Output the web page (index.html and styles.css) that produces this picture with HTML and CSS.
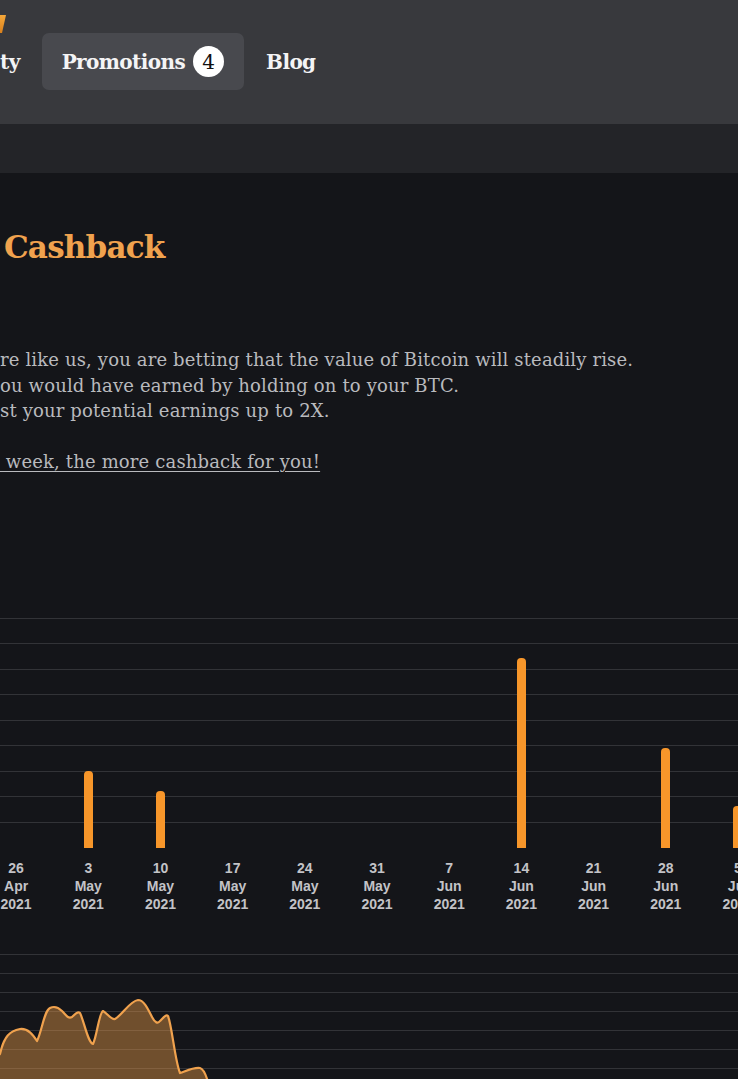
FILE: index.html
```html
<!DOCTYPE html>
<html lang="en">
<head>
<meta charset="utf-8">
<title>Cashback</title>
<link rel="stylesheet" href="styles.css">
</head>
<body>
<header class="topbar">
  <div class="logo-frag">
    <svg width="8" height="18" viewBox="0 0 8 18"><defs><linearGradient id="lg" x1="0" y1="0" x2="0" y2="1"><stop offset="0" stop-color="#f6a83a"/><stop offset="1" stop-color="#d9801c"/></linearGradient></defs><polygon points="0,0 6,0 2,18 0,18" fill="url(#lg)"/></svg>
  </div>
  <nav class="nav">
    <a class="nav-item first">ty</a>
    <a class="nav-item active">Promotions <span class="badge">4</span></a>
    <a class="nav-item">Blog</a>
  </nav>
</header>
<div class="subbar"></div>
<main class="content">
  <h1 class="title">Cashback</h1>
  <p class="intro">re like us, you are betting that the value of Bitcoin will steadily rise.<br>ou would have earned by holding on to your BTC.<br>st your potential earnings up to 2X.<br><br><a class="more">&nbsp;week, the more cashback for you!</a></p>

  <section class="bars">
    <div class="plot">
      <div class="col"></div>
      <div class="col"><div class="bar" style="height:77px"></div></div>
      <div class="col"><div class="bar" style="height:57px"></div></div>
      <div class="col"></div>
      <div class="col"></div>
      <div class="col"></div>
      <div class="col"></div>
      <div class="col"><div class="bar" style="height:190px"></div></div>
      <div class="col"></div>
      <div class="col"><div class="bar" style="height:100px"></div></div>
      <div class="col"><div class="bar" style="height:42px"></div></div>
    </div>
    <div class="axis">
      <div class="tick">26<br>Apr<br>2021</div>
      <div class="tick">3<br>May<br>2021</div>
      <div class="tick">10<br>May<br>2021</div>
      <div class="tick">17<br>May<br>2021</div>
      <div class="tick">24<br>May<br>2021</div>
      <div class="tick">31<br>May<br>2021</div>
      <div class="tick">7<br>Jun<br>2021</div>
      <div class="tick">14<br>Jun<br>2021</div>
      <div class="tick">21<br>Jun<br>2021</div>
      <div class="tick">28<br>Jun<br>2021</div>
      <div class="tick">5<br>Jul<br>2021</div>
    </div>
  </section>

  <section class="area">
    <svg class="area-svg" width="738" height="140" viewBox="0 0 738 140">
      <path class="area-fill" d="M-4,104 L0,100 C4,82 10,77 20,75 C28,74 33,81 37,87 C42,77 44,57 50,54 C54,52 58,53 62,57 C66,61 68,65 72,63 C75,60 78,57 80,59 C84,67 88,89 93,90 C97,82 99,59 103,57 C107,59 111,66 115,65 C122,61 130,47 138,46 C144,46 148,55 152,63 C155,69 158,70 160,67 C163,64 166,60 168,62 C172,72 175,107 180,119 C186,117 194,113 200,114 C204,115 206,121 208,128 L210,150 L-4,150 Z"/>
    </svg>
  </section>
</main>
</body>
</html>
```
FILE: styles.css
```css
html, body {
  margin: 0;
  padding: 0;
  background: #141519;
  overflow: hidden;
}
body {
  width: 738px;
  height: 1079px;
  font-family: "DejaVu Serif", "Liberation Serif", serif;
  color: #b9babe;
}
.topbar {
  background: #38393d;
  height: 124px;
  box-sizing: border-box;
  padding-top: 15px;
}
.logo-frag svg { display: block; }
.nav {
  display: flex;
  align-items: center;
  gap: 2px;
  height: 57px;
}
.nav-item {
  display: flex;
  align-items: center;
  height: 57px;
  box-sizing: border-box;
  padding: 0 20px;
  color: #f4f4f5;
  font-weight: bold;
  font-size: 20px;
  letter-spacing: -0.6px;
  border-radius: 7px;
}
.nav-item.first { padding-left: 0; }
.nav-item.active { background: #48494e; }
.badge {
  display: inline-flex;
  align-items: center;
  justify-content: center;
  width: 31px;
  height: 31px;
  margin-left: 8px;
  border-radius: 50%;
  background: #ffffff;
  color: #111;
  font-weight: normal;
  font-size: 20px;
  letter-spacing: 0;
}
.subbar {
  background: #232428;
  height: 49px;
}
.content {
  padding-top: 54px;
}
.title {
  margin: 0;
  padding-left: 4px;
  font-size: 31px;
  line-height: 40px;
  color: #f0a24e;
  font-weight: bold;
  letter-spacing: -0.8px;
}
.intro {
  margin: 80px 0 0 0;
  font-size: 18px;
  line-height: 25.6px;
  letter-spacing: 0.15px;
  color: #b9babe;
}
.more {
  color: #b9babe;
  text-decoration: underline;
  text-underline-offset: 3px;
}
.bars {
  margin-top: 143px;
  margin-left: -20px;
}
.plot {
  display: flex;
  height: 230px;
  align-items: flex-end;
  background-image: repeating-linear-gradient(to bottom, #323337 0, #323337 1px, transparent 1px, transparent 25.5px);
  background-size: 100% 229px;
  background-repeat: no-repeat;
  margin-left: 20px;
}
.plot .col:first-child { margin-left: -20px; }
.col {
  flex: 0 0 72.2px;
  display: flex;
  justify-content: center;
  align-items: flex-end;
  height: 100%;
}
.bar {
  width: 9px;
  background: #f7962a;
  border-radius: 4px 4px 0 0;
}
.axis {
  display: flex;
  margin-top: 11px;
}
.tick {
  flex: 0 0 72.2px;
  text-align: center;
  font-family: "Liberation Sans", Arial, sans-serif;
  font-weight: bold;
  font-size: 14px;
  line-height: 18px;
  color: #c3c3c7;
}
.area {
  margin-top: 41px;
  height: 140px;
  background-image: repeating-linear-gradient(to bottom, #323337 0, #323337 1px, transparent 1px, transparent 19px);
}
.area-svg { display: block; overflow: visible; }
.area-fill {
  fill: rgba(240, 160, 75, 0.42);
  stroke: #f0a24e;
  stroke-width: 2.2;
  stroke-linejoin: round;
}
```
